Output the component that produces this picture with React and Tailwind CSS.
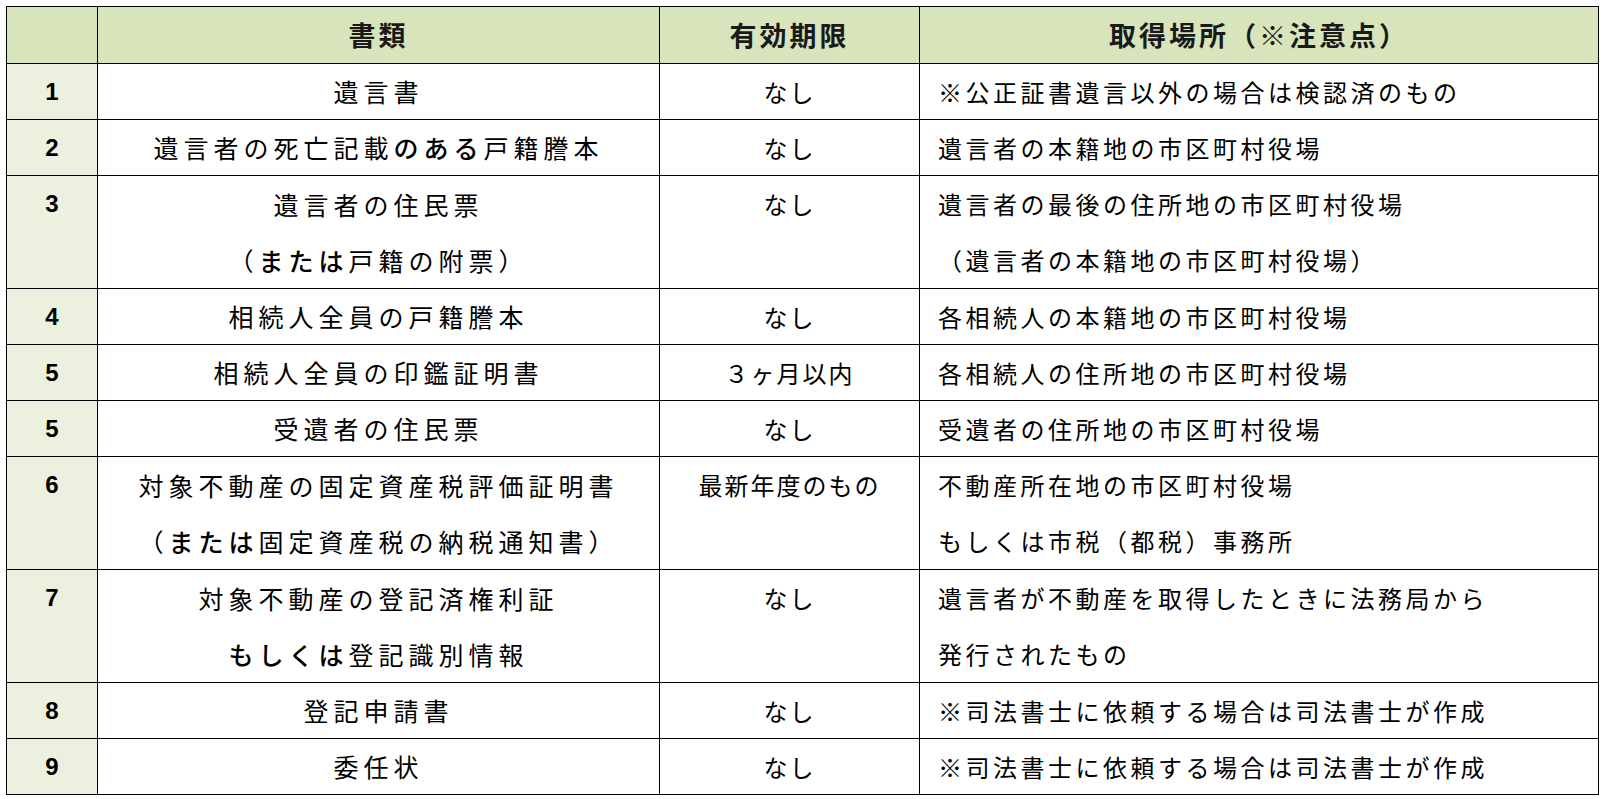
import React from "react";

const B = ({ children }) => <span className="font-medium">{children}</span>;

const rows = [
  { n: "1", doc: [["遺言書"]], limit: "なし", place: ["※公正証書遺言以外の場合は検認済のもの"] },
  { n: "2", doc: [["遺言者の死亡記載", <B key="b">のある</B>, "戸籍謄本"]], limit: "なし", place: ["遺言者の本籍地の市区町村役場"] },
  { n: "3", doc: [["遺言者の住民票"], ["（", <B key="b">または</B>, "戸籍の附票）"]], limit: "なし", place: ["遺言者の最後の住所地の市区町村役場", "（遺言者の本籍地の市区町村役場）"] },
  { n: "4", doc: [["相続人全員の戸籍謄本"]], limit: "なし", place: ["各相続人の本籍地の市区町村役場"] },
  { n: "5", doc: [["相続人全員の印鑑証明書"]], limit: "３ヶ月以内", place: ["各相続人の住所地の市区町村役場"] },
  { n: "5", doc: [["受遺者の住民票"]], limit: "なし", place: ["受遺者の住所地の市区町村役場"] },
  { n: "6", doc: [["対象不動産の固定資産税評価証明書"], ["（", <B key="b">または</B>, "固定資産税の納税通知書）"]], limit: "最新年度のもの", place: ["不動産所在地の市区町村役場", "もしくは市税（都税）事務所"] },
  { n: "7", doc: [["対象不動産の登記済権利証"], [<B key="b">もしくは</B>, "登記識別情報"]], limit: "なし", place: ["遺言者が不動産を取得したときに法務局から", "発行されたもの"] },
  { n: "8", doc: [["登記申請書"]], limit: "なし", place: ["※司法書士に依頼する場合は司法書士が作成"] },
  { n: "9", doc: [["委任状"]], limit: "なし", place: ["※司法書士に依頼する場合は司法書士が作成"] },
];

const jp = { fontFamily: '"Noto Sans CJK JP", "Noto Sans", sans-serif' };

export default function App() {
  return (
    <div className="w-[1604px] h-[799px] bg-white overflow-hidden pt-[6px] pl-[6px]" style={jp}>
      <table className="border-collapse table-fixed w-[1592px] text-black">
        <colgroup>
          <col className="w-[91px]" />
          <col className="w-[562px]" />
          <col className="w-[260px]" />
          <col className="w-[679px]" />
        </colgroup>
        <thead>
          <tr className="h-[57px] bg-[#d8e4bc]">
            <th className="border-[1.5px] border-black"></th>
            <th className="border-[1.5px] border-black text-[27px] font-bold tracking-[3px] text-[#1a1a1a] text-center">書類</th>
            <th className="border-[1.5px] border-black text-[27px] font-bold tracking-[3px] text-[#1a1a1a] text-center">有効期限</th>
            <th className="border-[1.5px] border-black text-[27px] font-bold tracking-[3px] text-[#1a1a1a] text-center">取得場所（※注意点）</th>
          </tr>
        </thead>
        <tbody>
          {rows.map((r, i) => {
            const two = r.doc.length > 1 || r.place.length > 1;
            const lh = two ? "leading-[56px]" : "leading-[55px]";
            return (
              <tr key={i} className="align-top">
                <td className={`border-[1.5px] border-black bg-[#ebf1de] text-center ${lh} text-[24px] font-bold`} style={{ fontFamily: '"Liberation Sans", Arial, sans-serif' }}>
                  {r.n}
                </td>
                <td className={`border-[1.5px] border-black text-center text-[25px] ${lh} tracking-[5px]`}>
                  {r.doc.map((l, j) => (
                    <div key={j} className="whitespace-nowrap">{l}</div>
                  ))}
                </td>
                <td className={`border-[1.5px] border-black text-center text-[24px] ${lh} tracking-[2px]`}>
                  {r.limit}
                </td>
                <td className={`border-[1.5px] border-black text-left pl-[18px] text-[24px] ${lh} tracking-[3.5px]`}>
                  {r.place.map((l, j) => (
                    <div key={j} className="whitespace-nowrap">{l}</div>
                  ))}
                </td>
              </tr>
            );
          })}
        </tbody>
      </table>
    </div>
  );
}
